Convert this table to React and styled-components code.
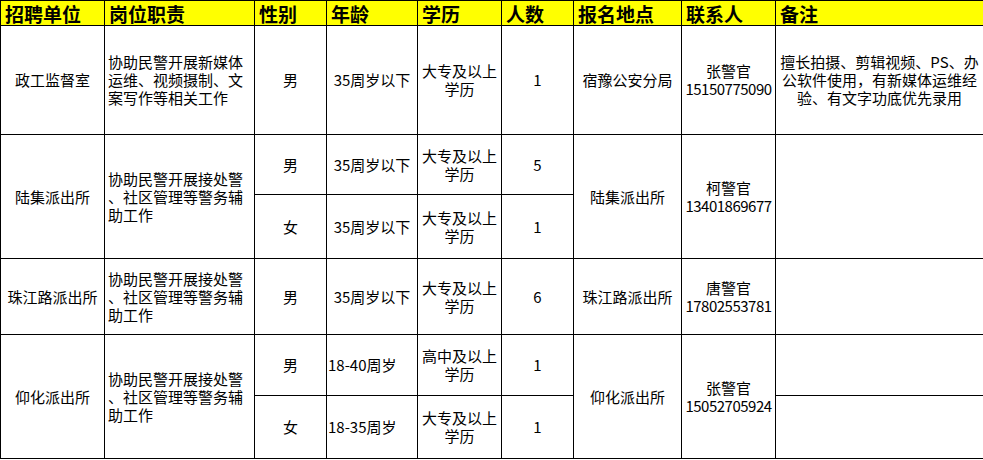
import React from "react";
import styled, { createGlobalStyle } from "styled-components";

const GlobalStyle = createGlobalStyle`
  body {
    margin: 0;
    background: #fff;
    font-family: "Noto Sans CJK SC", "Noto Sans", sans-serif;
  }
`;

const Table = styled.table`
  border-collapse: collapse;
  table-layout: fixed;
  width: 983px;
  color: #000;
  font-size: 15px;
  line-height: 18px;
`;

const Col = styled.col`
  width: ${(p) => p.$w}px;
`;

const HeadRow = styled.tr`
  height: 25px;
`;

const Row = styled.tr`
  height: ${(p) => p.$h}px;
`;

const HeadCell = styled.th`
  background: #ffff00;
  border: 1px solid #000;
  font-weight: 700;
  font-size: 19px;
  line-height: 22px;
  text-align: left;
  vertical-align: bottom;
  padding: 0 0 0 4px;
  white-space: nowrap;
  overflow: hidden;
`;

const Cell = styled.td`
  border: 1px solid #000;
  padding: 0 ${(p) => p.$pad || 0}px;
  text-align: ${(p) => p.$align || "center"};
  vertical-align: middle;
  white-space: nowrap;
  overflow: hidden;
`;

const Phone = styled.span`
  letter-spacing: -0.5px;
`;

const columns = [
  ["招聘单位", 104],
  ["岗位职责", 150],
  ["性别", 72],
  ["年龄", 91],
  ["学历", 84],
  ["人数", 72],
  ["报名地点", 108],
  ["联系人", 94],
  ["备注", 208],
];

const Duty = () => (
  <>
    协助民警开展接处警
    <br />
    、社区管理等警务辅
    <br />
    助工作
  </>
);

const Degree = ({ level = "大专" }) => (
  <>
    {level}及以上
    <br />
    学历
  </>
);

const Contact = ({ name, phone }) => (
  <>
    {name}
    <br />
    <Phone>{phone}</Phone>
  </>
);

export default function App() {
  return (
    <>
      <GlobalStyle />
      <Table>
        <colgroup>
          {columns.map(([title, w]) => (
            <Col key={title} $w={w} />
          ))}
        </colgroup>
        <thead>
          <HeadRow>
            {columns.map(([title]) => (
              <HeadCell key={title}>{title}</HeadCell>
            ))}
          </HeadRow>
        </thead>
        <tbody>
          <Row $h={109}>
            <Cell>政工监督室</Cell>
            <Cell $align="left" $pad={3}>
              协助民警开展新媒体
              <br />
              运维、视频摄制、文
              <br />
              案写作等相关工作
            </Cell>
            <Cell>男</Cell>
            <Cell>35周岁以下</Cell>
            <Cell>
              <Degree />
            </Cell>
            <Cell>1</Cell>
            <Cell>宿豫公安分局</Cell>
            <Cell>
              <Contact name="张警官" phone="15150775090" />
            </Cell>
            <Cell>
              擅长拍摄、剪辑视频、PS、办
              <br />
              公软件使用，有新媒体运维经
              <br />
              验、有文字功底优先录用
            </Cell>
          </Row>

          <Row $h={60}>
            <Cell rowSpan={2}>陆集派出所</Cell>
            <Cell rowSpan={2} $align="left" $pad={3}>
              <Duty />
            </Cell>
            <Cell>男</Cell>
            <Cell>35周岁以下</Cell>
            <Cell>
              <Degree />
            </Cell>
            <Cell>5</Cell>
            <Cell rowSpan={2}>陆集派出所</Cell>
            <Cell rowSpan={2}>
              <Contact name="柯警官" phone="13401869677" />
            </Cell>
            <Cell rowSpan={2} />
          </Row>
          <Row $h={64}>
            <Cell>女</Cell>
            <Cell>35周岁以下</Cell>
            <Cell>
              <Degree />
            </Cell>
            <Cell>1</Cell>
          </Row>

          <Row $h={76}>
            <Cell>珠江路派出所</Cell>
            <Cell $align="left" $pad={3}>
              <Duty />
            </Cell>
            <Cell>男</Cell>
            <Cell>35周岁以下</Cell>
            <Cell>
              <Degree />
            </Cell>
            <Cell>6</Cell>
            <Cell>珠江路派出所</Cell>
            <Cell>
              <Contact name="唐警官" phone="17802553781" />
            </Cell>
            <Cell />
          </Row>

          <Row $h={61}>
            <Cell rowSpan={2}>仰化派出所</Cell>
            <Cell rowSpan={2} $align="left" $pad={3}>
              <Duty />
            </Cell>
            <Cell>男</Cell>
            <Cell $align="left" $pad={1}>
              18-40周岁
            </Cell>
            <Cell>
              <Degree level="高中" />
            </Cell>
            <Cell>1</Cell>
            <Cell rowSpan={2}>仰化派出所</Cell>
            <Cell rowSpan={2}>
              <Contact name="张警官" phone="15052705924" />
            </Cell>
            <Cell />
          </Row>
          <Row $h={63}>
            <Cell>女</Cell>
            <Cell $align="left" $pad={1}>
              18-35周岁
            </Cell>
            <Cell>
              <Degree />
            </Cell>
            <Cell>1</Cell>
            <Cell />
          </Row>
        </tbody>
      </Table>
    </>
  );
}
